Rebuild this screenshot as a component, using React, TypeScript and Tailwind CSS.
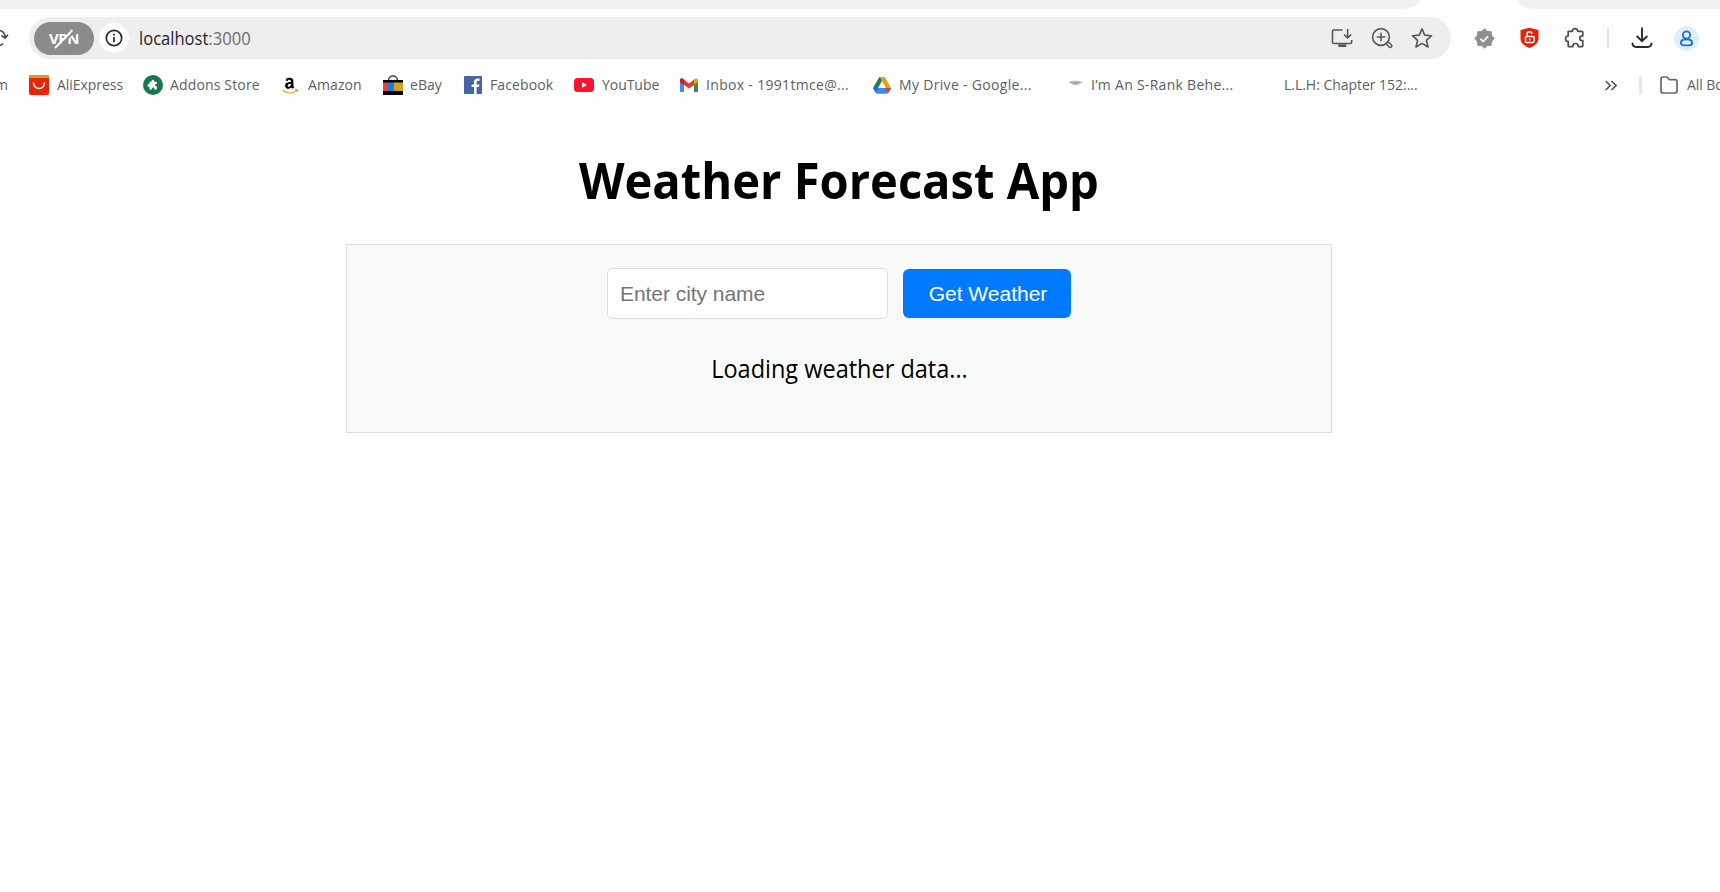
import type { ReactNode } from "react";

const ui = "font-['Open_Sans','Noto_Sans',sans-serif]";

function Bookmark({ width, iconBox, label, text, children }: { width: string; iconBox: string; label: string; text: string; children?: ReactNode }) {
  return (
    <div className={`flex h-full shrink-0 items-center ${width}`}>
      <span className={`flex shrink-0 items-center ${iconBox}`}>{children}</span>
      <span className={`whitespace-nowrap ${text}`}>{label}</span>
    </div>
  );
}

function AliExpress() {
  return (
    <svg width="20" height="20" viewBox="0 0 20 20">
      <rect width="20" height="20" rx="2" fill="#e62408" />
      <path d="M0 3V2a2 2 0 0 1 2-2h16a2 2 0 0 1 2 2v1Z" fill="#d9a010" />
      <path d="M4.500 8c1 7.300 10 7.300 11 0" fill="none" stroke="#fff" strokeWidth="1.500" strokeLinecap="round" />
    </svg>
  );
}

function Addons() {
  return (
    <svg width="20" height="20" viewBox="0 0 20 20">
      <circle cx="10" cy="10" r="10" fill="#147a4b" />
      <path d="M6.500 6.800h2.100V6a1.300 1.300 0 0 1 2.600 0v.8h2.600v2.300h-.6a1.100 1.100 0 0 0 0 2.200h.6v3.200h-2.500v-.7a1.200 1.200 0 0 0-2.400 0v.7H6.500v-2.700h-.7a1.300 1.300 0 0 1 0-2.600h.7Z" fill="#fff" />
    </svg>
  );
}

function Amazon() {
  return (
    <svg width="17" height="20" viewBox="0 0 17 20">
      <path d="M3.600 5.500C3.800 3.300 5.400 2.700 7.400 2.700c3 0 4 1.400 4 3.500v4.100c0 1 .4 1.400.9 2l-1.800 1.500-1.300-1.300c-2 2.300-6.100 1.700-6.100-1.700 0-3 2.600-3.600 5.800-3.700 0-1.500-.3-2.300-1.500-2.300-.9 0-1.400.4-1.600 1.200ZM8.900 8.700c-2 0-3.200.4-3.200 1.900 0 2.100 3.300 1.500 3.200-1.900Z" fill="#000" fillRule="evenodd" />
      <path d="M.7 15c4.300 3.900 9.800 3.600 14 .8M13 14.700l2.600-.1-.7 2.200" fill="none" stroke="#f4a62a" strokeWidth="1.300" />
    </svg>
  );
}

function Ebay() {
  return (
    <svg width="20" height="20" viewBox="0 0 20 20">
      <path d="M5.500 8V5.500c0-6 9-6 9 0V8" fill="none" stroke="#444" strokeWidth="1.400" />
      <path d="M0 5h20v15H0Z" fill="#000" />
      <path d="M0 7.500h5V16H0Z" fill="#ed3c3c" />
      <path d="M5 7.500h5.500V16H5Z" fill="#1c79e8" />
      <path d="M10.500 7.500H20V16h-9.500Z" fill="#d2a516" />
    </svg>
  );
}

function Facebook() {
  return (
    <svg width="18" height="18" viewBox="0 0 18 18">
      <rect width="18" height="18" rx="1" fill="#4964a4" />
      <path d="M10 18v-7H7.600V8.400H10V6.200c0-2.400 1.400-3.600 3.600-3.600h1.900v2.500h-1.400c-1.200 0-1.500.6-1.500 1.500v1.800h2.800l-.4 2.600h-2.400v7Z" fill="#fff" />
    </svg>
  );
}

function YouTube() {
  return (
    <svg width="20" height="14" viewBox="0 0 20 14">
      <rect width="20" height="14" rx="3.500" fill="#fa142d" />
      <path d="m8 4.200 5 2.800-5 2.800Z" fill="#fff" />
    </svg>
  );
}

function Gmail() {
  return (
    <svg width="18" height="14" viewBox="0 0 18 14">
      <path d="M0 3h4v11H1a1 1 0 0 1-1-1Z" fill="#4389f2" />
      <path d="M14 3h4v10a1 1 0 0 1-1 1h-3Z" fill="#36895a" />
      <path d="M0 2C0 .2 2 0 3 .7L9 5.400 15 .7 14 7 9 10.500 0 4Z" fill="#e53b2f" />
      <path d="M14 1.500c1.700-1.500 4-1 4 .8V4l-4 3Z" fill="#dda514" />
      <path d="M0 2C0 .2 2 0 4 1.500V7L0 4Z" fill="#c5221f" />
    </svg>
  );
}

function Drive() {
  return (
    <svg width="18" height="17" viewBox="0 0 18 17">
      <path d="M6.800 0h4.300q.9 0 1.500 1L18 11h-5.500Z" fill="#dda514" />
      <path d="M0 11h18l-2.800 5q-.5.800-1.500.8H4.300q-1 0-1.500-.8Z" fill="#3f87ee" />
      <path d="M12.500 11H18l-2.600 5Z" fill="#e43e31" />
      <path d="M0 11h5.200L2.600 15.500Z" fill="#2868d8" />
      <path d="m0 11 5.700-10Q6.200 0 7 0L9 4 5.300 11Z" fill="#2d7d4f" />
      <path d="m9 4.500 3.700 6.500H5.300Z" fill="#fff" />
    </svg>
  );
}

function Smudge() {
  return (
    <svg className="-mt-[4px]" width="16" height="7" viewBox="0 0 16 7">
      <path d="M0 2Q7-1 15 1.800q-3 3.600-7 3.200Q3 5 3 3Z" fill="#c6cdca" />
      <path d="M2 2.300h10M5 3.800h5" stroke="#939b97" strokeWidth="1" />
    </svg>
  );
}

function BrowserTop() {
  return (
    <>
      <div className="flex h-[9px] justify-between">
        <div className="w-[1420px] rounded-br-[18px_9px] bg-[#f1f1ef]" />
        <div className="w-[202px] rounded-bl-[18px_9px] bg-[#f1f1ef]" />
      </div>

      <div className="flex h-[58px] items-center">
        <div className="w-[29px] shrink-0">
          <svg width="10" height="22" viewBox="0 0 10 22" fill="none" stroke="#444b48" strokeWidth="1.600">
            <path d="M0 3.500C3 4.200 5 6.500 5.200 10.500M1.500 8.500l3.700 2.700L8 7.800M0 18.500q1.800-.6 3-2" />
          </svg>
        </div>
        <div className="flex h-[42px] w-[1422px] shrink-0 items-center rounded-full bg-[#efedee] pl-[5px] pr-[18px]">
          <div className="relative flex h-[33px] w-[60px] shrink-0 items-center justify-center rounded-full bg-[#8b8b8b]">
            <span className="pt-[1px] font-['Open_Sans',sans-serif] text-[15px] font-bold leading-none tracking-[-0.5px] text-white">VPN</span>
            <svg className="absolute left-[18px] top-[5px]" width="24" height="24" viewBox="0 0 24 24">
              <path d="M4.500 22.500 23 4" stroke="#8b8b8b" strokeWidth="2" />
              <path d="M3 21 20.500 3" stroke="#fff" strokeWidth="1.800" />
            </svg>
          </div>
          <div className="ml-[5px] flex h-[30px] w-[30px] shrink-0 items-center justify-center rounded-full bg-white">
            <svg width="18" height="18" viewBox="0 0 18 18" fill="none" stroke="#26292c" strokeWidth="1.700">
              <circle cx="9" cy="9" r="7.700" />
              <path d="M9 8v5.200M9 4.700v1.900" />
            </svg>
          </div>
          <div className={`ml-[10px] origin-left scale-x-[0.92] text-[18px] leading-6 text-[#26282a] ${ui}`}>
            localhost<span className="text-[#6b6d70]">:3000</span>
          </div>
          <div className="ml-auto flex items-center gap-[18px]">
            <svg width="22" height="22" viewBox="0 0 22 22" fill="none" stroke="#555759" strokeWidth="1.600">
              <path d="M11.500 3H3Q1.500 3 1.500 4.500v10.700Q1.500 16.500 3 16.500h16q1.700 0 1.700-1.500v-2M16.600 2v8.700M13 7.500l3.600 3.400 3.600-3.400" />
              <path d="M7.300 17.300h8V20h-8Z" fill="#555759" stroke="none" />
            </svg>
            <svg width="22" height="22" viewBox="0 0 22 22" fill="none" stroke="#555759" strokeWidth="1.600">
              <circle cx="10" cy="10" r="8.400" />
              <path d="M10 5.700v8.600M5.700 10h8.600" />
              <rect x="15.200" y="16.400" width="6" height="3" rx="1.400" transform="rotate(45 18.200 17.900)" fill="#efedee" strokeWidth="1.400" />
            </svg>
            <svg width="22" height="22" viewBox="0 0 22 22" fill="none" stroke="#555759" strokeWidth="1.600" strokeLinejoin="round">
              <path d="m11 1.800 2.700 6.300 6.900.6-5.200 4.600 1.600 6.700-6-3.600L5 20l1.600-6.700-5.200-4.600 6.900-.6Z" />
            </svg>
          </div>
        </div>

        <svg className="ml-[23px] shrink-0" width="21" height="21" viewBox="0 0 21 21">
          <path d="m10.500.3 2.800 2.600 4.400.4.300 4.300 2.700 2.900-2.700 2.900-.3 4.300-4.400.4-2.800 2.600-2.800-2.600-4.400-.4-.3-4.300L.3 10.500 3 7.600l.3-4.300 4.400-.4Z" fill="#8e908e" />
          <path d="m6.300 10.800 2.800 2.500 5-5" fill="none" stroke="#fff" strokeWidth="1.700" />
        </svg>
        <svg className="ml-[25px] shrink-0" width="19" height="22" viewBox="0 0 19 22">
          <path d="M9.500.7 18.500 3v8.500c0 4.500-4 7.500-9 9.500-5-2-9-5-9-9.500V3Z" fill="#e32208" />
          <rect x="5.500" y="9.500" width="8.500" height="6" rx="1" fill="none" stroke="#fff" strokeWidth="1.500" />
          <path d="M7 9V7.200C7 4 12 4 12 7M9.700 11.500v2" fill="none" stroke="#fff" strokeWidth="1.400" />
        </svg>
        <svg className="ml-[25px] shrink-0" width="22" height="22" viewBox="0 0 22 22" fill="none" stroke="#46514a" strokeWidth="1.700" strokeLinejoin="round">
          <path d="M4.200 4.300h4.100a2.700 2.700 0 0 1 5.400 0h4.100q1 0 1 1v3.600h-.6a2.400 2.400 0 0 0 0 4.800h.6v5q0 1-1 1h-3.600v-.5a2.700 2.700 0 0 0-5.400 0v.5H5.200q-1 0-1-1v-4.300a2.700 2.700 0 0 1 0-5.400Z" />
        </svg>
        <div className="ml-[21px] h-5 w-[2px] shrink-0 bg-[#e5e5e5]" />
        <svg className="ml-[22px] shrink-0" width="22" height="22" viewBox="0 0 22 22" fill="none" stroke="#282a35" strokeWidth="1.900" strokeLinecap="round">
          <path d="M11 1.300v12.500M6.200 9.500l4.800 4.700 4.800-4.700M1.500 16.500c.2 2.300 1.200 3.500 3.500 3.500h12c2.300 0 3.300-1.200 3.500-3.500" />
        </svg>
        <div className="ml-[21px] flex h-[25px] w-[25px] shrink-0 items-center justify-center rounded-full bg-[#e1effc]">
          <svg width="15" height="17" viewBox="0 0 15 17" fill="none" stroke="#1473e6" strokeWidth="1.900">
            <circle cx="7.500" cy="5" r="3.600" />
            <path d="M7.500 9.200c3.500 0 5.600 1.300 5.600 3.600 0 1.800-1.400 2.600-3 2.600H4.900c-1.600 0-3-.8-3-2.600 0-2.300 2.100-3.600 5.600-3.600Z" />
          </svg>
        </div>
      </div>

      <div className={`flex h-[36px] items-center overflow-hidden text-[14px] leading-5 text-[#5d5f61] ${ui}`}>
        <div className="flex w-[29px] shrink-0"><span className="-ml-[5px]">m</span></div>
        <Bookmark width="w-[114px]" iconBox="w-[28px]" label="AliExpress" text="tracking-[-0.05px]"><AliExpress /></Bookmark>
        <Bookmark width="w-[139px]" iconBox="w-[27px]" label="Addons Store" text="tracking-[0.15px]"><Addons /></Bookmark>
        <Bookmark width="w-[101px]" iconBox="w-[26px]" label="Amazon" text="tracking-[0.1px]"><Amazon /></Bookmark>
        <Bookmark width="w-[81px]" iconBox="w-[27px]" label="eBay" text="tracking-[0.05px]"><Ebay /></Bookmark>
        <Bookmark width="w-[110px]" iconBox="w-[26px]" label="Facebook" text="tracking-[0.1px]"><Facebook /></Bookmark>
        <Bookmark width="w-[106px]" iconBox="w-[28px]" label="YouTube" text="tracking-[-0.05px]"><YouTube /></Bookmark>
        <Bookmark width="w-[193px]" iconBox="w-[26px]" label="Inbox - 1991tmce@..." text="tracking-[0.32px]"><Gmail /></Bookmark>
        <Bookmark width="w-[195px]" iconBox="w-[26px]" label="My Drive - Google..." text="tracking-[0.32px]"><Drive /></Bookmark>
        <Bookmark width="w-[193px]" iconBox="w-[23px]" label="I’m An S-Rank Behe..." text="tracking-[0.28px]"><Smudge /></Bookmark>
        <Bookmark width="w-[344px]" iconBox="w-[23px]" label="L.L.H: Chapter 152:..." text="tracking-[-0.03px]" />
        <svg className="shrink-0" width="12" height="11" viewBox="0 0 12 11" fill="none" stroke="#555759" strokeWidth="1.700">
          <path d="m.7 1 4.500 4.500L.7 10M6.500 1 11 5.500 6.500 10" />
        </svg>
        <div className="ml-[22px] h-[19px] w-[3px] shrink-0 rounded-full bg-[#e6e6e6]" />
        <svg className="ml-[18px] shrink-0" width="18" height="18" viewBox="0 0 18 18" fill="none" stroke="#666967" strokeWidth="1.700" strokeLinejoin="round">
          <path d="M3 1h4l2.300 2.700H15q2 0 2 2V15q0 2-2 2H3q-2 0-2-2V3q0-2 2-2Z" />
        </svg>
        <span className="ml-[9px] shrink-0 whitespace-nowrap tracking-[-0.05px]">All Bookmarks</span>
      </div>
    </>
  );
}

export default function App() {
  return (
    <div className="h-[892px] w-[1720px] overflow-hidden bg-[#fefefe]">
      <BrowserTop />
      <main className={`ml-[346px] flex w-[986px] flex-col items-center text-black ${ui}`}>
        <h1 className="mt-[43px] h-[98px] scale-x-[0.942] whitespace-nowrap text-[50px] font-bold leading-[68px]">Weather Forecast App</h1>
        <section className="flex h-[189px] w-full flex-col items-center border border-[#dcdedd] bg-[#f8faf9] pt-[23px]">
          <div className="flex items-center gap-[15px] font-['Liberation_Sans',Arial,sans-serif] text-[21px]">
            <input
              className="h-[51px] w-[281px] rounded-[6px] border border-[#dedede] bg-white px-[12px] tracking-[-0.05px] outline-none placeholder:text-[#757575]"
              placeholder="Enter city name"
            />
            <button className="h-[49px] w-[168px] rounded-[6px] bg-[#007bff] pl-[2px] text-white">Get Weather</button>
          </div>
          <p className="mt-[31px] scale-x-[0.94] whitespace-nowrap text-[25px] leading-9">Loading weather data...</p>
        </section>
      </main>
    </div>
  );
}
